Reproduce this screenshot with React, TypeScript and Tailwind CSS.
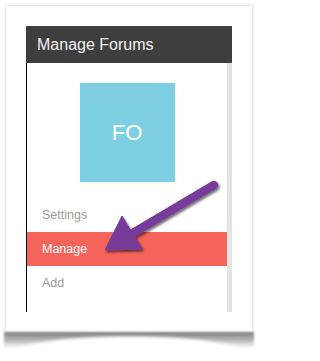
const MENU = [
  { label: 'Settings', active: false },
  { label: 'Manage', active: true },
  { label: 'Add', active: false },
];

function Arrow() {
  return (
    <svg className="pointer-events-none absolute left-0 top-0" width="266" height="361" viewBox="0 0 266 361">
      <defs>
        <filter id="arrow-shadow" x="-20%" y="-20%" width="140%" height="140%">
          <feDropShadow dx="1.5" dy="2" stdDeviation="1.2" floodColor="#000" floodOpacity="0.55" />
        </filter>
      </defs>
      <g filter="url(#arrow-shadow)" fill="#773a99" stroke="#773a99">
        <line x1="214" y1="185" x2="128" y2="236" strokeWidth="8.5" strokeLinecap="round" />
        <polygon points="105,250 122,216 142,249" strokeWidth="1" strokeLinejoin="round" />
      </g>
    </svg>
  );
}

export default function App() {
  return (
    <div className="relative w-[266px] h-[361px] bg-white pl-[6px] pt-[6px] font-['Liberation_Sans',Arial,sans-serif]">
      <div className="w-[246px] h-[326px] bg-white p-[20px] shadow-[0_0_3px_rgba(0,0,0,0.25)]">
        <div className="flex h-full flex-col">
          <div className="flex h-[37px] items-center bg-[#3e3e3e] pl-[11px] text-[16px] text-[#f2f2f2]">
            Manage Forums
          </div>
          <div className="flex flex-1">
            <div className="w-px bg-black" />
            <div className="flex flex-1 flex-col pt-[20px]">
              <div className="mx-auto flex h-[99px] w-[95px] items-center justify-center bg-[#7dcfe1] text-[22px] text-white">
                FO
              </div>
              <ul className="mt-[16px]">
                {MENU.map((item) => (
                  <li
                    key={item.label}
                    className={`flex h-[34px] items-center pl-[15px] text-[12.5px] ${
                      item.active ? 'bg-[#f5645b] text-white' : 'text-[#9b9b9b]'
                    }`}
                  >
                    {item.label}
                  </li>
                ))}
              </ul>
            </div>
            <div className="w-[5px] bg-[#e3e3e3]" />
          </div>
        </div>
      </div>
      {/* curled page shadow */}
      <div className="ml-[-2px] h-[16px] w-[250px] blur-[1px] bg-[radial-gradient(ellipse_48%_100%_at_50%_120%,#fff_84%,rgba(255,255,255,0)_100%),linear-gradient(#7e7e7e,#bdbdbd_55%,rgba(255,255,255,0))]" />
      <Arrow />
    </div>
  );
}
